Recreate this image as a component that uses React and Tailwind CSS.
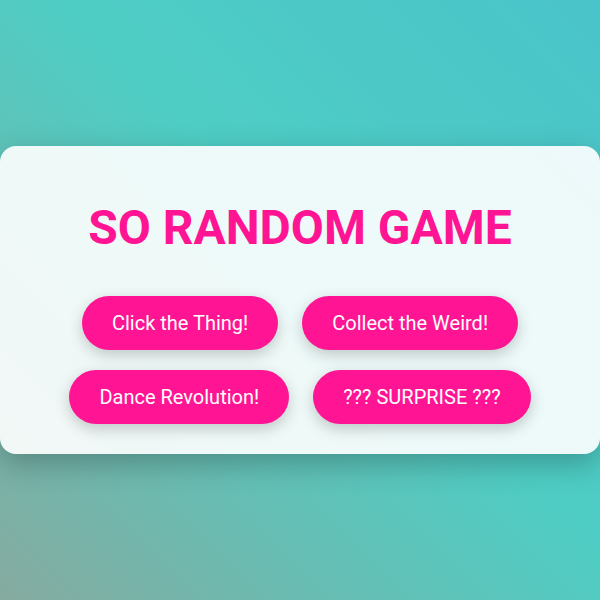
import React from "react";

const games = [
  "Click the Thing!",
  "Collect the Weird!",
  "Dance Revolution!",
  "??? SURPRISE ???",
];

const App = () => {
  return (
    <div className="flex h-[600px] w-[600px] items-center justify-center overflow-hidden bg-[linear-gradient(45deg,#86aa9f_0%,#65bfb5_30%,#4ecdc4_55%,#4ac4ca_100%)] font-['Roboto',sans-serif]">
      <div className="flex w-full flex-col items-center rounded-2xl bg-white/90 px-[40px] pt-[54px] pb-[30px] shadow-[0_10px_30px_rgba(0,0,0,0.25)]">
        <h1 className="text-[48px] font-bold leading-[56px] text-[#ff1493]">
          SO RANDOM GAME
        </h1>
        <div className="mt-[40px] flex flex-wrap justify-center gap-x-6 gap-y-5">
          {games.map((game) => (
            <button
              key={game}
              type="button"
              className="rounded-full bg-[#ff1493] px-[30px] py-[15px] text-[20px] leading-6 text-white shadow-[0_5px_15px_rgba(0,0,0,0.2)]"
            >
              {game}
            </button>
          ))}
        </div>
      </div>
    </div>
  );
};

export default App;
